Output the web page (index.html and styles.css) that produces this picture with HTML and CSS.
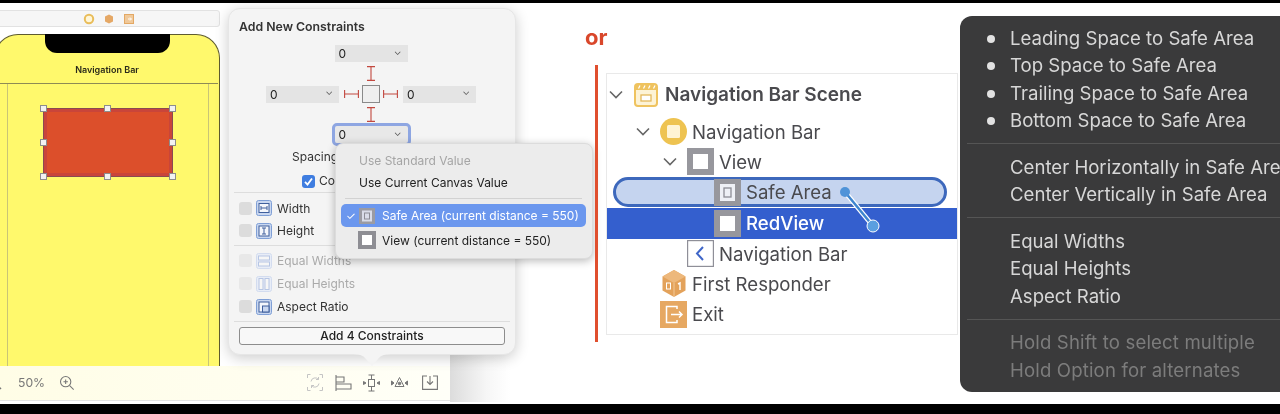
FILE: index.html
```html
<!DOCTYPE html>
<html lang="en">
<head>
<meta charset="utf-8">
<title>Add New Constraints</title>
<link rel="stylesheet" href="styles.css">
</head>
<body>
<div class="stage">
  <section class="xcode">
    <div class="toolbar">
      <svg class="tb-icon" width="12" height="12" viewBox="0 0 12 12"><circle cx="6" cy="6" r="4.2" fill="#fff6d8" stroke="#e9bd5a" stroke-width="2"/></svg>
      <svg class="tb-icon" width="12" height="12" viewBox="0 0 12 12"><path d="M6 1.500l4 2v5l-4 2-4-2v-5z" fill="#e5a866"/></svg>
      <svg class="tb-icon" width="12" height="12" viewBox="0 0 12 12"><rect x="1.5" y="1.5" width="9" height="9" fill="#f0c99a" stroke="#e3a864"/><path d="M5 6h3M7 4.5L8.5 6 7 7.500" stroke="#fff" fill="none"/></svg>
    </div>
    <div class="phone">
      <div class="notch"></div>
      <div class="navtitle">Navigation Bar</div>
      <div class="safe">
        <div class="redview">
          <i class="h tl"></i><i class="h tm"></i><i class="h tr"></i>
          <i class="h ml"></i><i class="h mr"></i>
          <i class="h bl"></i><i class="h bm"></i><i class="h br"></i>
        </div>
      </div>
    </div>
    <div class="bottombar">
      <svg class="zoom-out" width="8" height="16" viewBox="0 0 8 16"><path d="M-3 10l4 4" stroke="#777" stroke-width="1.4" fill="none"/></svg>
      <span class="pct">50%</span>
      <svg class="zoom-in" width="16" height="16" viewBox="0 0 18 18" fill="none" stroke="#777" stroke-width="1.2"><circle cx="7.500" cy="7.500" r="5.800"/><path d="M12 12l4.500 4.500M5 7.500h5M7.500 5v5"/></svg>
      <div class="tools">
        <svg class="t-update" width="16" height="17" viewBox="0 0 16 17" fill="none" stroke="#c4c4c4" stroke-width="1"><path d="M.5 4V.5h3M12.500.5h3V4M15.500 13v3.500h-3M3.500 16.500h-3V13"/><path d="M4 7.500a4.200 4.200 0 0 1 7.500-2M12 9.500a4.200 4.200 0 0 1-7.500 2M11.500 3v2.500H9M4.500 14v-2.500H7"/></svg>
        <svg class="t-align" width="17" height="16" viewBox="0 0 17 16" fill="none" stroke="#777" stroke-width="1.100"><path d="M1 0v16M1 2h8v5H1M1 9h15v5H1"/></svg>
        <svg class="t-pin" width="17" height="18" viewBox="0 0 17 18" fill="none" stroke="#777" stroke-width="1"><rect x="5.500" y="5.500" width="6" height="7"/><path d="M5.500 1h6M8.500 1v4.500M5.500 17h6M8.500 12.500V17"/><path d="M.5 7.500v3L3 9zM16.500 7.500v3L14 9z" fill="#777"/></svg>
        <svg class="t-embed" width="17" height="16" viewBox="0 0 17 16" fill="none" stroke="#777" stroke-width="1"><path d="M8.500 2.500l4.500 9H4z"/><circle cx="8.500" cy="8.500" r="1.300" fill="#777"/><path d="M.5 6v4L3 8zM16.500 6v4L14 8z" fill="#777"/></svg>
        <svg class="t-box" width="16" height="15" viewBox="0 0 16 15" fill="none" stroke="#777" stroke-width="1.100"><path d="M5 1H.6v13.400h14.800V1H11M8 1v8M5 6.500L8 9.500l3-3"/></svg>
      </div>
    </div>
  </section>
  <aside class="gutter"></aside>

  <section class="popover">
    <h1 class="pop-title">Add New Constraints</h1>
    <div class="pin">
      <div class="field f-top"><span>0</span><b>⌄</b></div>
      <svg class="beam b-top" width="10" height="15" viewBox="0 0 10 15"><path d="M1 .6h8M5 .6v13.800M1 14.400h8" stroke="#c2483f" stroke-width="1.100" fill="none"/></svg>
      <div class="field f-left"><span>0</span><b>⌄</b></div>
      <div class="center-row">
        <svg width="15" height="10" viewBox="0 0 15 10"><path d="M.6 1v8M.6 5h13.800M14.400 1v8" stroke="#c2483f" stroke-width="1.100" fill="none"/></svg>
        <div class="center-box"></div>
        <svg width="15" height="10" viewBox="0 0 15 10"><path d="M.6 1v8M.6 5h13.800M14.400 1v8" stroke="#c2483f" stroke-width="1.100" fill="none"/></svg>
      </div>
      <div class="field f-right"><span>0</span><b>⌄</b></div>
      <svg class="beam b-bottom" width="10" height="15" viewBox="0 0 10 15"><path d="M1 .6h8M5 .6v13.800M1 14.400h8" stroke="#c2483f" stroke-width="1.100" fill="none"/></svg>
      <div class="field f-bottom"><span>0</span><b>⌄</b></div>
    </div>
    <div class="spacing">Spacing</div>
    <label class="margins"><span class="blue-check"><svg width="13" height="13" viewBox="0 0 13 13"><path d="M3 6.800l2.500 2.700L10 3.500" stroke="#fff" stroke-width="1.800" fill="none"/></svg></span>Co</label>
    <div class="section">
      <div class="opt"><i class="box"></i>
        <svg class="cicon" width="16" height="16" viewBox="0 0 16 16"><rect x=".5" y=".5" width="15" height="15" rx="2" fill="#c9d7f0" stroke="#7f9fd6"/><rect x="3" y="3.500" width="10" height="9" fill="#f4f6fb" stroke="#3f5f9c"/><path d="M5 8h6M5 6v4M11 6v4" stroke="#3f5f9c" fill="none"/></svg>
        <span>Width</span></div>
      <div class="opt"><i class="box"></i>
        <svg class="cicon" width="16" height="16" viewBox="0 0 16 16"><rect x=".5" y=".5" width="15" height="15" rx="2" fill="#c9d7f0" stroke="#7f9fd6"/><rect x="3" y="3" width="10" height="10" fill="#f4f6fb" stroke="#3f5f9c"/><path d="M8 5v6M6 5h4M6 11h4" stroke="#3f5f9c" fill="none"/></svg>
        <span>Height</span></div>
    </div>
    <div class="section second">
      <div class="opt off tall"><i class="box"></i>
        <svg class="cicon" width="16" height="16" viewBox="0 0 16 16"><rect x=".5" y=".5" width="15" height="15" rx="2" fill="#e8edf7" stroke="#d3dcef"/><rect x="2.500" y="3" width="11" height="4" fill="#f6f6f6" stroke="#b7c6e4"/><rect x="2.500" y="9" width="11" height="4" fill="#f6f6f6" stroke="#b7c6e4"/></svg>
        <span>Equal Widths</span></div>
      <div class="opt off tall"><i class="box"></i>
        <svg class="cicon" width="16" height="16" viewBox="0 0 16 16"><rect x=".5" y=".5" width="15" height="15" rx="2" fill="#e8edf7" stroke="#d3dcef"/><rect x="3" y="2.500" width="4" height="11" fill="#f6f6f6" stroke="#b7c6e4"/><rect x="9" y="2.500" width="4" height="11" fill="#f6f6f6" stroke="#b7c6e4"/></svg>
        <span>Equal Heights</span></div>
      <div class="opt tall"><i class="box"></i>
        <svg class="cicon" width="16" height="16" viewBox="0 0 16 16"><rect x=".5" y=".5" width="15" height="15" rx="2" fill="#c9d7f0" stroke="#7f9fd6"/><rect x="3" y="3" width="10" height="10" fill="#f4f6fb" stroke="#3f5f9c"/><rect x="6.500" y="7" width="6.500" height="6" fill="#c9d7f0" stroke="#3f5f9c"/></svg>
        <span>Aspect Ratio</span></div>
    </div>
    <div class="section third"><button class="add">Add 4 Constraints</button></div>
    <svg class="pop-arrow" width="44" height="12" viewBox="0 0 44 12"><path d="M0 0c9 0 13 1 16 5l6 7 6-7c3-4 7-5 16-5z" fill="#f4f4f4"/></svg>

    <div class="menu">
      <div class="m-item dim">Use Standard Value</div>
      <div class="m-item">Use Current Canvas Value</div>
      <hr class="m-sep">
      <div class="m-item sel"><em>✓</em>
        <svg width="16" height="16" viewBox="0 0 16 16"><rect width="16" height="16" fill="#9b9ba2"/><rect x="3" y="2.500" width="10" height="11" fill="#d9dce8"/><rect x="5.500" y="5" width="5" height="6" fill="none" stroke="#8d8d96"/></svg>
        <span>Safe Area (current distance = 550)</span></div>
      <div class="m-item view"><svg width="18" height="18" viewBox="0 0 18 18"><rect width="18" height="18" fill="#8e8e94"/><rect x="4" y="4" width="10" height="10" fill="#fff"/></svg>
        <span>View (current distance = 550)</span></div>
    </div>
  </section>

  <div class="or">or</div>
  <section class="outline-wrap">
    <div class="redline"></div>
    <div class="tree">
      <div class="row scene">
        <svg class="chev" width="14" height="9" viewBox="0 0 14 9"><path d="M1 1.500l6 6 6-6" stroke="#666" stroke-width="1.600" fill="none"/></svg>
        <svg class="ic" width="24" height="24" viewBox="0 0 24 24"><rect x="1" y="1" width="22" height="22" rx="3" fill="#fdf3d6" stroke="#efc35f" stroke-width="2"/><path d="M1 7V3a2 2 0 0 1 2-2h18a2 2 0 0 1 2 2v4z" fill="#efc35f"/><path d="M6 2.500L4.500 5.500M11 2.500L9.500 5.500M16 2.500l-1.500 3M21 2.500l-1.500 3" stroke="#fff" stroke-width="1.200"/><rect x="7" y="12" width="10" height="6" fill="#fff" stroke="#e4b95c" stroke-width="1.300"/></svg>
        <span>Navigation Bar Scene</span>
      </div>
      <div class="row l1">
        <svg class="chev" width="14" height="9" viewBox="0 0 14 9"><path d="M1 1.500l6 6 6-6" stroke="#666" stroke-width="1.600" fill="none"/></svg>
        <svg class="ic" width="27" height="27" viewBox="0 0 27 27"><circle cx="13.500" cy="13.500" r="13.500" fill="#eec351"/><rect x="7" y="7" width="13" height="13" rx="1.500" fill="#fff4d4"/></svg>
        <span>Navigation Bar</span>
      </div>
      <div class="row l2">
        <svg class="chev" width="14" height="9" viewBox="0 0 14 9"><path d="M1 1.500l6 6 6-6" stroke="#666" stroke-width="1.600" fill="none"/></svg>
        <svg class="ic" width="27" height="27" viewBox="0 0 27 27"><rect width="27" height="27" fill="#97979d"/><rect x="6" y="6" width="15" height="15" fill="#fff"/></svg>
        <span>View</span>
      </div>
      <div class="row safe-row">
        <svg class="ic" width="27" height="27" viewBox="0 0 27 27"><rect width="27" height="27" fill="#97979d"/><rect x="6" y="5" width="15" height="17" fill="#eef0f6"/><rect x="10" y="9" width="7" height="9" fill="none" stroke="#8d8d96" stroke-width="1.300"/></svg>
        <span>Safe Area</span>
      </div>
      <div class="row red-row">
        <svg class="ic" width="27" height="27" viewBox="0 0 27 27"><rect width="27" height="27" fill="#97979d"/><rect x="6" y="6" width="15" height="15" fill="#fff"/></svg>
        <span>RedView</span>
      </div>
      <div class="row l2b">
        <svg class="ic" width="27" height="27" viewBox="0 0 27 27"><rect x=".6" y=".6" width="25.800" height="25.800" fill="#fff" stroke="#8f8f98" stroke-width="1.200"/><path d="M16 7l-6 6.500 6 6.500" stroke="#3f66c8" stroke-width="2" fill="none"/></svg>
        <span>Navigation Bar</span>
      </div>
      <div class="row l1b">
        <svg class="ic" width="24" height="27" viewBox="0 0 24 27"><path d="M12 0l11.500 6.500v14L12 27 .5 20.500v-14z" fill="#e3a25b"/><path d="M.5 6.500L12 13l11.500-6.500L12 0z" fill="#edb87c"/><path d="M12 13v14" stroke="#f3c998"/><rect x="4.500" y="13" width="4" height="6" fill="none" stroke="#fff"/><path d="M16 14l2-1v7" stroke="#fff" stroke-width="1.400" fill="none"/></svg>
        <span>First Responder</span>
      </div>
      <div class="row l1c">
        <svg class="ic" width="27" height="27" viewBox="0 0 27 27"><rect width="27" height="27" fill="#e6a862"/><path d="M17 8V5.500H6.500v16H17V19" stroke="#fff" stroke-width="1.500" fill="none"/><path d="M11 13.500h11M19 10.500l3 3-3 3" stroke="#fff" stroke-width="1.500" fill="none"/></svg>
        <span>Exit</span>
      </div>
    </div>
    <svg class="wire" width="50" height="56" viewBox="0 0 50 56"><path d="M8 6l28 34" stroke="#fff" stroke-width="5"/><path d="M8 6l28 34" stroke="#3f86cf" stroke-width="2.500"/><circle cx="8" cy="6" r="5" fill="#4f93d8"/><circle cx="36" cy="40" r="6" fill="#5b9fe0" stroke="#fff" stroke-width="1"/></svg>
  </section>

  <section class="dark">
    <ul class="d-group">
      <li class="bul">Leading Space to Safe Area</li>
      <li class="bul">Top Space to Safe Area</li>
      <li class="bul">Trailing Space to Safe Area</li>
      <li class="bul">Bottom Space to Safe Area</li>
    </ul>
    <ul class="d-group">
      <li>Center Horizontally in Safe Area</li>
      <li>Center Vertically in Safe Area</li>
    </ul>
    <ul class="d-group">
      <li>Equal Widths</li>
      <li>Equal Heights</li>
      <li>Aspect Ratio</li>
    </ul>
    <ul class="d-group muted">
      <li>Hold Shift to select multiple</li>
      <li>Hold Option for alternates</li>
    </ul>
  </section>
</div>
</body>
</html>
```

FILE: styles.css
```css
* { box-sizing: border-box; }
html, body { margin: 0; padding: 0; background: #000; }
body { width: 1280px; height: 414px; overflow: hidden; font-family: "Inter", "Liberation Sans", sans-serif; }
.stage { position: relative; width: 1280px; height: 401px; margin-top: 3px; background: #fff; overflow: hidden; filter: blur(.4px); }

/* left: Interface Builder canvas */
.xcode { position: absolute; left: 0; top: 0; width: 450px; height: 401px; background: #fff; display: flex; flex-direction: column; }
.toolbar { margin: 7px 0 0 -3px; width: 223px; height: 17px; background: #f6f6f6; border: 1px solid #e2e2e2; border-radius: 3px; display: flex; align-items: center; justify-content: center; gap: 8px; flex: none; }
.phone { position: relative; margin: 7px 0 0 -6px; width: 226px; height: 332px; flex: none; background: #fff96c; border: 1px solid #5f5c30; border-bottom: 0; border-radius: 24px 24px 0 0; }
.notch { position: absolute; left: 50px; top: -1px; width: 125px; height: 19px; background: #000; border-radius: 0 0 12px 12px; }
.navtitle { height: 48px; padding-top: 28px; text-align: center; font-size: 9px; font-weight: 600; color: #2a2a1a; line-height: 14px; }
.safe { height: 283px; margin: 0 10px 0 12px; border-left: 1px solid #c9c576; border-right: 1px solid #c9c576; padding: 25px 0 0 35px; position: relative; }
.safe::before { content: ""; position: absolute; left: -12px; right: -10px; top: 0; border-top: 1px solid #8e8b55; }
.redview { position: relative; width: 130px; height: 69px; background: #dc4f2b; border: 1px solid #8a4a52; box-shadow: inset 0 0 0 3px #c9453a; }
.h { position: absolute; width: 7px; height: 7px; background: #f2f2f2; border: 1px solid #8d8d8d; }
.tl { left: -4px; top: -4px; } .tm { left: 60px; top: -4px; } .tr { right: -4px; top: -4px; }
.ml { left: -4px; top: 30px; } .mr { right: -4px; top: 30px; }
.bl { left: -4px; bottom: -4px; } .bm { left: 60px; bottom: -4px; } .br { right: -4px; bottom: -4px; }
.bottombar { position: relative; flex: none; height: 35px; background: linear-gradient(90deg, #fffde6 0%, #fffef0 60%, #fffff8 100%); border-bottom: 1px solid #e4e4e4; display: flex; align-items: center; padding-bottom: 1px; }
.zoom-out { flex: none; margin-right: 10px; }
.pct { font-size: 12.200px; color: #777; width: 41px; }
.tools { margin-left: auto; margin-right: 12px; display: flex; align-items: center; gap: 11px; }
.t-align { margin-left: 1px; }
.t-box { margin-left: 3px; }
.gutter { position: absolute; left: 450px; top: 335px; width: 60px; height: 64px; background: linear-gradient(90deg, #dcdcdc, #f6f6f6 60%, #fff); }

/* popover */
.popover { position: absolute; left: 228px; top: 5px; width: 288px; height: 347px; background: #f4f4f4; border-radius: 12px; border: 1px solid #e6e6e6; box-shadow: 0 3px 14px rgba(0,0,0,.2); padding: 0 5px; display: flex; flex-direction: column; }
.pop-title { margin: 11px 0 0 5px; font-size: 12.300px; line-height: 14px; font-weight: 600; color: #333; }
.pin { margin: 11px 0 0 -2px; display: grid; grid-template-columns: 75px 62px 75px; grid-template-rows: 17px 23px 18px 23px 17px; justify-content: center; justify-items: center; align-items: center; }
.field { width: 73px; height: 17px; background: #e4e4e4; display: flex; align-items: center; justify-content: space-between; padding: 0 6px 0 4px; font-size: 12px; color: #222; }
.field b { font-weight: 400; font-size: 10px; line-height: 10px; margin-top: -6px; color: #555; }
.f-top { grid-column: 2; grid-row: 1; }
.b-top { grid-column: 2; grid-row: 2; }
.f-left { grid-column: 1; grid-row: 3; }
.center-row { grid-column: 2; grid-row: 3; display: flex; align-items: center; gap: 3px; margin: 0 -3px; }
.center-box { width: 18px; height: 18px; flex: none; background: #efefef; border: 1px solid #8a8a8a; }
.f-right { grid-column: 3; grid-row: 3; }
.b-bottom { grid-column: 2; grid-row: 4; }
.f-bottom { grid-column: 2; grid-row: 5; outline: 3px solid #8ea6e2; border-radius: 2px; background: #e8e8e8; }
.spacing { margin: 7px 0 0 58px; font-size: 12px; line-height: 14px; color: #333; white-space: nowrap; }
.margins { margin: 10px 0 0 68px; display: flex; align-items: center; gap: 4px; font-size: 12px; line-height: 14px; color: #333; white-space: nowrap; }
.blue-check { width: 13px; height: 13px; border-radius: 3px; background: #3f7de0; display: block; flex: none; }
.section { border-top: 1px solid #ddd; margin-top: 4px; padding: 4px 0 0 5px; display: flex; flex-direction: column; height: 53px; }
.section.second { margin-top: 0; height: 76px; padding-top: 3px; }
.section.third { margin-top: 0; padding: 5px 5px 0 5px; height: auto; }
.opt { height: 22.500px; display: flex; align-items: center; font-size: 12px; color: #333; }
.opt.tall { height: 23px; }
.opt.off { color: #aaa; }
.opt.off .box { opacity: .5; }
.box { width: 13px; height: 13px; border-radius: 3px; background: #dcdcdc; flex: none; margin-right: 4px; }
.cicon { flex: none; margin-right: 5px; }
.add { width: 266px; height: 18px; padding: 0; background: #f8f8f8; border: 1px solid #8d8d8d; border-radius: 3px; font: 500 12px/16px "Inter", "Liberation Sans", sans-serif; color: #222; }
.pop-arrow { position: absolute; left: 121px; bottom: -12px; }

/* dropdown */
.menu { position: absolute; left: 106px; top: 134px; width: 258px; height: 116px; background: #ececec; border-radius: 8px; box-shadow: 0 2px 9px rgba(0,0,0,.28); border: 1px solid #dcdcdc; padding: 5px 6px 0 5px; }
.m-item { height: 22px; padding-left: 18px; display: flex; align-items: center; font-size: 12px; color: #222; white-space: nowrap; position: relative; }
.m-item.dim { color: #a5a5a5; }
.m-sep { border: 0; border-top: 1px solid #d2d2d2; margin: 5px 4px 5px; }
.m-item.sel { height: 23px; background: #6b97ee; color: #fff; border-radius: 5px; gap: 7px; }
.m-item.sel em { position: absolute; left: 5px; font-style: normal; font-size: 11px; }
.m-item.view { height: 24px; gap: 6px; padding-left: 17px; margin-top: 1px; }

/* or */
.or { position: absolute; left: 585px; top: 20px; font-size: 22px; line-height: 28px; font-weight: 700; color: #d9472b; }

/* outline */
.outline-wrap { position: absolute; left: 595px; top: 62px; width: 363px; height: 278px; }
.redline { position: absolute; left: 0; top: 0; width: 3px; height: 277px; background: #e04f2e; }
.tree { position: absolute; left: 11px; top: 8px; width: 352px; height: 262px; background: #fff; border: 1px solid #e9e9e9; padding-top: 5.500px; color: #4a4a4e; font-size: 18.600px; }
.row { display: flex; align-items: center; height: 30.250px; white-space: nowrap; position: relative; }
.row .ic { flex: none; margin-right: 5px; }
.row .chev { flex: none; margin-right: 10px; }
.scene { padding-left: 2px; margin-bottom: 7px; font-weight: 600; font-size: 19px; height: 30px; }
.scene .chev { margin-right: 11px; }
.scene .ic { margin-right: 7px; }
.l1 { padding-left: 29px; }
.l2 { padding-left: 56px; }
.safe-row { margin-left: 6px; width: 334px; padding-left: 98px; background: #c5d4ef; border: 3px solid #3d68bc; border-radius: 15px; height: 30px; }
.red-row { margin-top: 1px; padding-left: 107px; background: #345fce; color: #fff; font-weight: 500; height: 30.500px; }
.l2b { padding-left: 80px; }
.l1b { padding-left: 55px; }
.l1b .ic { margin-right: 6px; }
.l1c { padding-left: 53px; }
.wire { position: absolute; left: 242px; top: 121px; }

/* dark panel */
.dark { position: absolute; left: 960px; top: 13px; width: 340px; height: 376px; background: #3a3a3b; border-radius: 12px; padding: 9px 0 0 7px; color: #d7d7d7; font-size: 18.600px; font-weight: 400; }
.d-group { list-style: none; margin: 0 0 9.600px; padding: 0 0 9px 43px; border-bottom: 1px solid #555; }
.d-group:last-child { border-bottom: 0; }
.d-group li { height: 27.300px; line-height: 27px; white-space: nowrap; position: relative; }
.d-group li.bul::before { content: ""; position: absolute; left: -23px; top: 10px; width: 8px; height: 8px; border-radius: 50%; background: #e2e2e2; }
.d-group.muted { color: #7c7c7c; letter-spacing: .15px; }
```
